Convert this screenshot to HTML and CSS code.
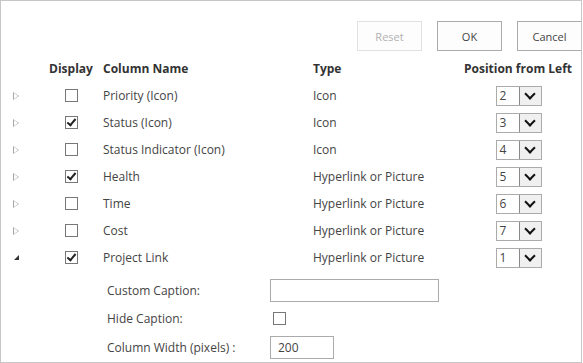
FILE: index.html
```html
<html>
<head>
    <link rel="stylesheet" href="styles.css">
</head>
<body>
    <div class="frame">
        <div class="toolbar">
            <button class="btn" disabled>Reset</button>
            <button class="btn">OK</button>
            <button class="btn">Cancel</button>
        </div>

        <div class="grid head">
            <div></div>
            <div class="center">Display</div>
            <div>Column Name</div>
            <div>Type</div>
            <div class="center">Position from Left</div>
        </div>

        <div class="grid row">
            <div class="arrow"><span class="tri"></span></div>
            <div class="center"><span class="check"></span></div>
            <div>Priority (Icon)</div>
            <div>Icon</div>
            <div class="center"><span class="pick"><span class="val">2</span><span class="drop"></span></span></div>
        </div>
        <div class="grid row">
            <div class="arrow"><span class="tri"></span></div>
            <div class="center"><span class="check on"></span></div>
            <div>Status (Icon)</div>
            <div>Icon</div>
            <div class="center"><span class="pick"><span class="val">3</span><span class="drop"></span></span></div>
        </div>
        <div class="grid row">
            <div class="arrow"><span class="tri"></span></div>
            <div class="center"><span class="check"></span></div>
            <div>Status Indicator (Icon)</div>
            <div>Icon</div>
            <div class="center"><span class="pick"><span class="val">4</span><span class="drop"></span></span></div>
        </div>
        <div class="grid row">
            <div class="arrow"><span class="tri"></span></div>
            <div class="center"><span class="check on"></span></div>
            <div>Health</div>
            <div>Hyperlink or Picture</div>
            <div class="center"><span class="pick"><span class="val">5</span><span class="drop"></span></span></div>
        </div>
        <div class="grid row">
            <div class="arrow"><span class="tri"></span></div>
            <div class="center"><span class="check"></span></div>
            <div>Time</div>
            <div>Hyperlink or Picture</div>
            <div class="center"><span class="pick"><span class="val">6</span><span class="drop"></span></span></div>
        </div>
        <div class="grid row">
            <div class="arrow"><span class="tri"></span></div>
            <div class="center"><span class="check"></span></div>
            <div>Cost</div>
            <div>Hyperlink or Picture</div>
            <div class="center"><span class="pick"><span class="val">7</span><span class="drop"></span></span></div>
        </div>
        <div class="grid row">
            <div class="arrow"><span class="tri open"></span></div>
            <div class="center"><span class="check on"></span></div>
            <div>Project Link</div>
            <div>Hyperlink or Picture</div>
            <div class="center"><span class="pick"><span class="val">1</span><span class="drop"></span></span></div>
        </div>

        <div class="details">
            <div class="field">
                <div class="label">Custom Caption:</div>
                <div class="box wide"></div>
            </div>
            <div class="field">
                <div class="label">Hide Caption:</div>
                <div><span class="check small"></span></div>
            </div>
            <div class="field">
                <div class="label">Column Width (pixels) :</div>
                <div class="box narrow">200</div>
            </div>
        </div>
    </div>
</body>
</html>
```

FILE: styles.css
```css
body {
    margin: 0;
    background: #ffffff;
    font-family: "Open Sans", "Noto Sans", sans-serif;
    font-size: 12px;
    color: #444444;
}

.frame {
    width: 580px;
    height: 361px;
    border: 1px solid #c6c6c6;
    overflow: hidden;
}

.toolbar {
    display: flex;
    padding: 20px 0 0 356px;
    gap: 15px;
    height: 29px;
}

.btn {
    flex: none;
    width: 65px;
    height: 30px;
    border: 1px solid #ababab;
    background-color: #fdfdfd;
    background-image: radial-gradient(#ececec 0.5px, transparent 0.6px);
    background-size: 2px 2px;
    font-family: inherit;
    font-size: 11px;
    color: #444444;
    padding: 0;
}

.btn[disabled] {
    border-color: #e1e1e1;
    color: #b1b1b1;
}

.grid {
    display: grid;
    grid-template-columns: 48px 44px 220px 150px 110px;
    align-items: center;
}

.grid > div:nth-child(3) {
    margin-left: 10px;
}

.head {
    margin-top: 5px;
    height: 27px;
    font-weight: bold;
    color: #333333;
}

.row {
    height: 27px;
}

.center {
    text-align: center;
}

.arrow {
    padding-left: 12px;
    height: 27px;
    display: flex;
    align-items: center;
}

.tri {
    display: inline-block;
    width: 0;
    height: 0;
    border-top: 4px solid transparent;
    border-bottom: 4px solid transparent;
    border-left: 6px solid #a6a6a6;
    position: relative;
}

.tri::after {
    content: "";
    position: absolute;
    left: -5px;
    top: -3px;
    border-top: 3px solid transparent;
    border-bottom: 3px solid transparent;
    border-left: 4px solid #ffffff;
}

.tri.open {
    border: none;
    width: 0;
    height: 0;
    border-bottom: 5px solid #333333;
    border-left: 5px solid transparent;
    margin-left: 1px;
}

.tri.open::after {
    display: none;
}

.check {
    display: inline-block;
    width: 11px;
    height: 11px;
    border: 1px solid #777777;
    background: #ffffff;
    vertical-align: middle;
    position: relative;
}

.check.on::after {
    content: "";
    position: absolute;
    left: 3px;
    top: 0px;
    width: 3px;
    height: 7px;
    border-right: 2px solid #222222;
    border-bottom: 2px solid #222222;
    transform: rotate(40deg);
}

.pick {
    display: inline-flex;
    width: 46px;
    height: 20px;
    border: 1px solid #ababab;
    box-sizing: border-box;
    vertical-align: middle;
    text-align: left;
    margin-left: 1px;
}

.val {
    flex: 1;
    padding-left: 3px;
    line-height: 18px;
}

.drop {
    width: 21px;
    height: 18px;
    background: #f0f0f0;
    border-left: 1px solid #8a8a8a;
    position: relative;
}

.drop::after {
    content: "";
    position: absolute;
    left: 6px;
    top: 3px;
    width: 6px;
    height: 6px;
    border-right: 2px solid #111111;
    border-bottom: 2px solid #111111;
    transform: rotate(45deg);
}

.details {
    padding: 5px 0 0 106px;
}

.field {
    display: grid;
    grid-template-columns: 163px auto;
    align-items: center;
    height: 28.5px;
}

.box {
    height: 23px;
    box-sizing: border-box;
    border: 1px solid #ababab;
    padding-left: 7px;
    line-height: 21px;
    color: #444444;
}

.wide {
    width: 169px;
}

.narrow {
    width: 64px;
}

.check.small {
    margin-left: 3px;
}
```
